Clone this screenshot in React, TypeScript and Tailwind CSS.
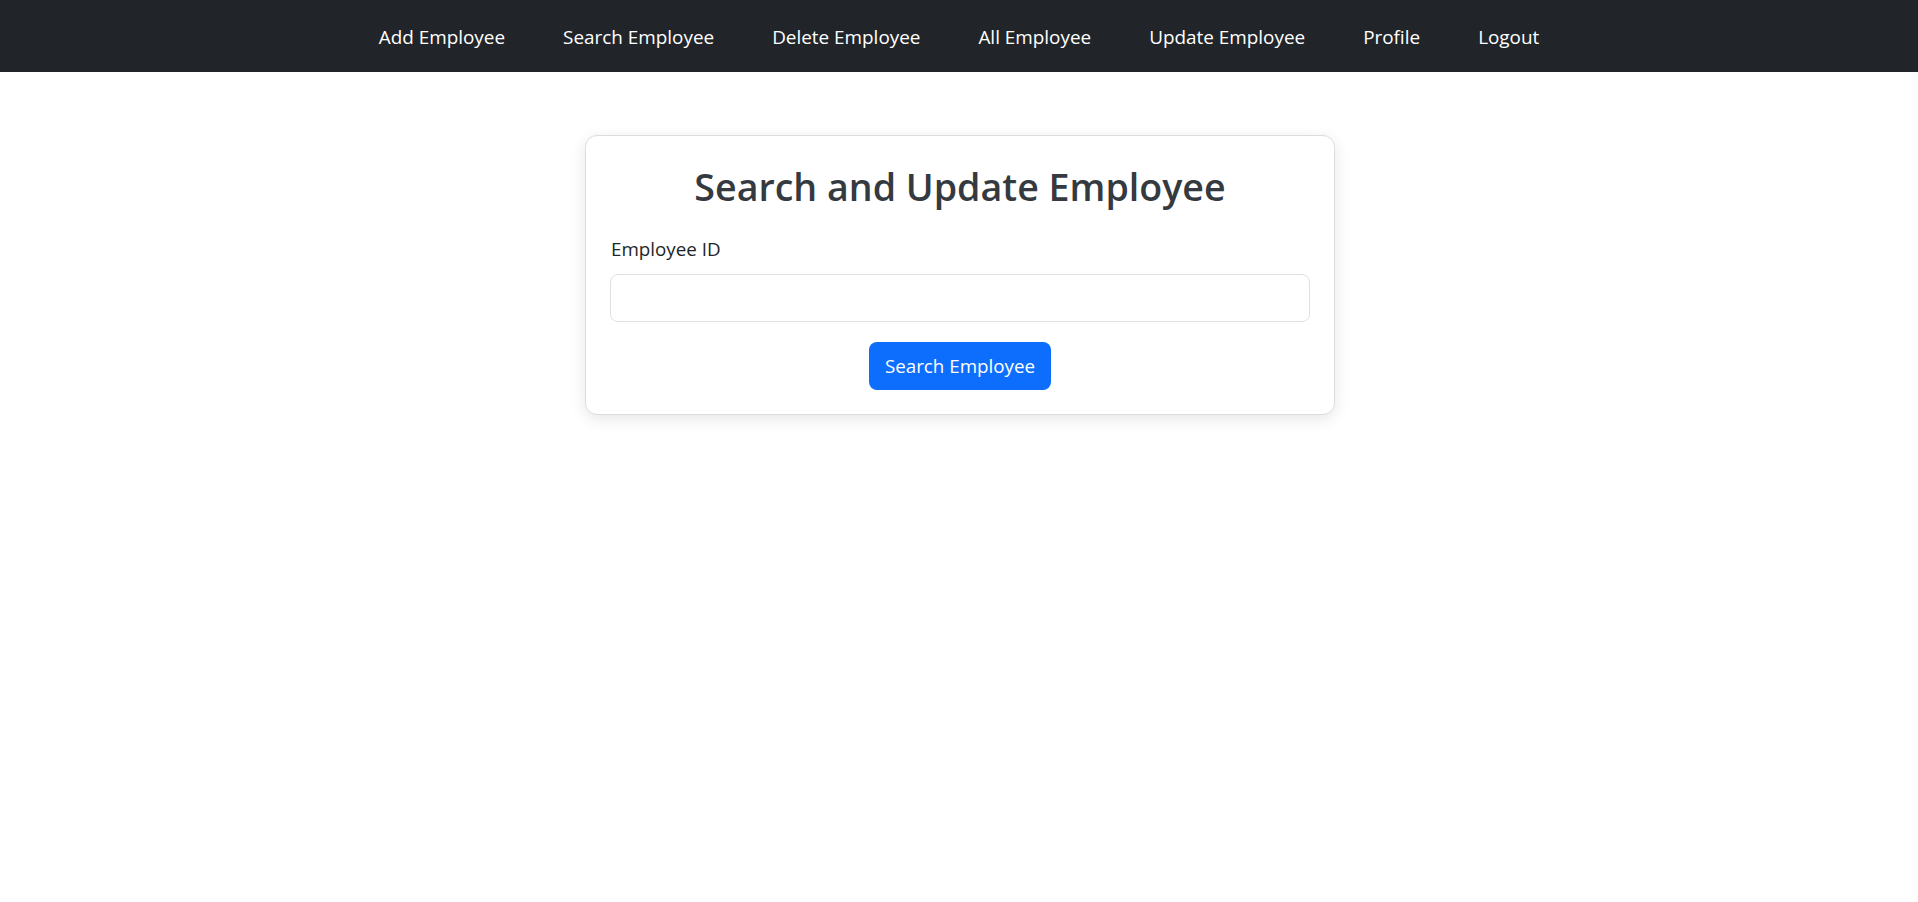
import React from "react";

const navItems = [
  "Add Employee",
  "Search Employee",
  "Delete Employee",
  "All Employee",
  "Update Employee",
  "Profile",
  "Logout",
];

export default function App() {
  return (
    <div
      className="min-h-[902px] bg-white"
      style={{ fontFamily: '"Open Sans", "Noto Sans", sans-serif' }}
    >
      <nav className="h-[72px] bg-[#212529] flex items-center justify-center">
        <ul className="flex items-center gap-[58px] pt-[2px]">
          {navItems.map((item) => (
            <li key={item}>
              <a href="#" className="text-white text-[18.9px] leading-[30px]">
                {item}
              </a>
            </li>
          ))}
        </ul>
      </nav>

      <div className="flex justify-center pt-[63px] pl-[2px]">
        <div className="w-[750px] rounded-[12px] border border-[#dcdde0] bg-white p-6 shadow-[0_4px_15px_rgba(0,0,0,0.1)]">
          <h1 className="text-center text-[37.6px] leading-[48px] font-semibold text-[#343a40] mb-[22px] pt-[3px]">
            Search and Update Employee
          </h1>
          <label className="block text-[18.8px] leading-[30px] text-[#212529] mb-[10px] pt-[1px] pl-[1px]">
            Employee ID
          </label>
          <input
            type="text"
            className="block w-full h-[48px] rounded-[8px] border border-[#dee2e6] px-4 text-[18.8px] outline-none"
          />
          <div className="flex justify-center mt-5">
            <button className="h-[48px] rounded-[8px] bg-[#0d6efd] px-4 text-white text-[18.8px] leading-[30px]">
              Search Employee
            </button>
          </div>
        </div>
      </div>
    </div>
  );
}
